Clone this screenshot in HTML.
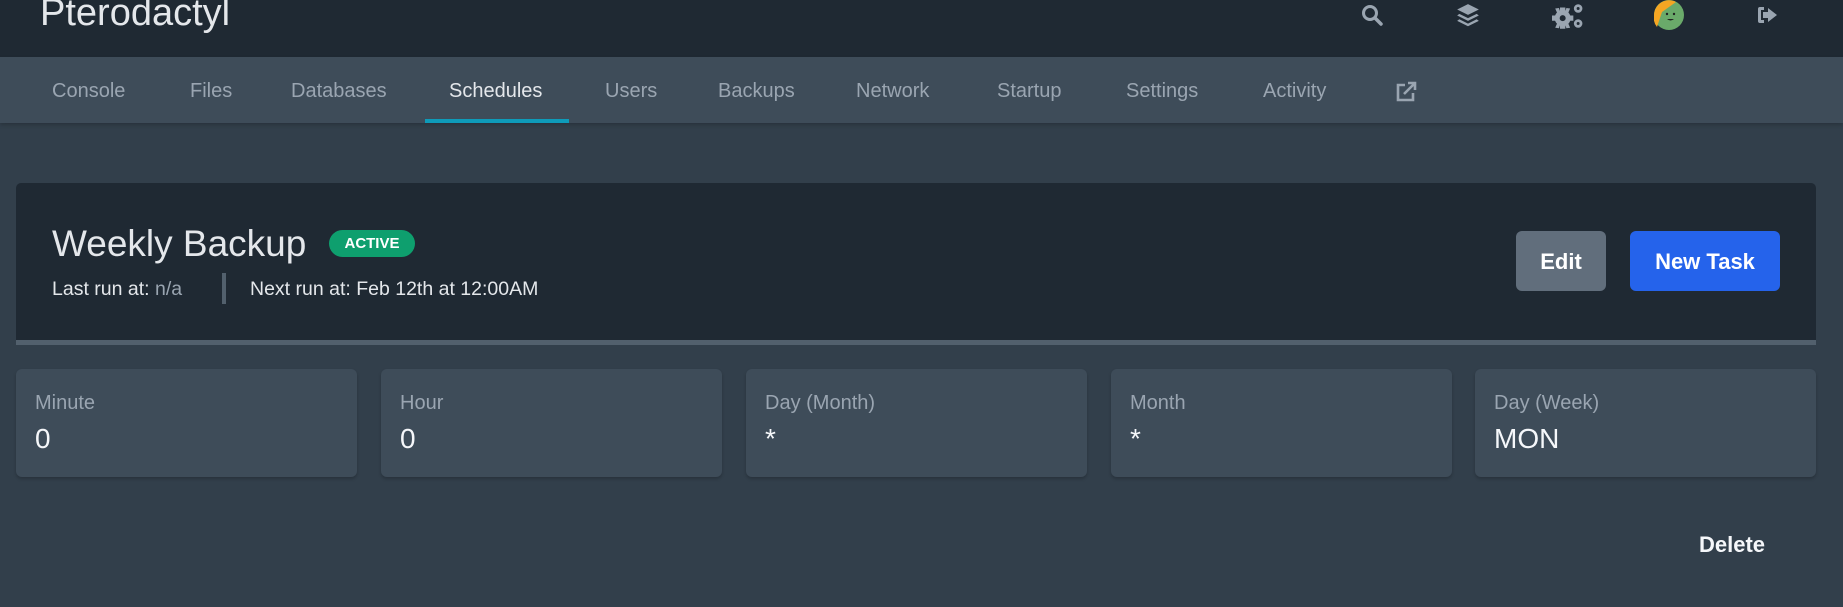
<!DOCTYPE html>
<html><head><meta charset="utf-8"><style>
*{box-sizing:border-box;margin:0;padding:0}
body{width:1843px;height:607px;overflow:hidden;background:#323f4b;font-family:"Liberation Sans",sans-serif;position:relative}
.hdr{position:absolute;left:0;top:0;width:1843px;height:57px;background:#1f2933}
.logo{position:absolute;left:40px;top:-8px;font-size:38px;color:#e4e7eb}
.ic{position:absolute;top:3px;width:24px;height:24px}
.nav{position:absolute;left:0;top:57px;width:1843px;height:66px;background:#3e4c59;box-shadow:0 2px 4px rgba(0,0,0,.2)}
.nav span{position:absolute;top:23px;font-size:20px;color:#9aa5b1}
.nav span.act{color:#e4e7eb}
.ul{position:absolute;left:425px;top:119px;width:144px;height:4px;background:#0e9bb9}
.card{position:absolute;left:16px;top:183px;width:1800px;height:162px;background:#1f2933;border-radius:5px 5px 0 0;border-bottom:5px solid #52606d}
.title{position:absolute;left:36px;top:40px;font-size:37px;color:#e4e7eb}
.badge{position:absolute;left:313px;top:47px;width:86px;height:27px;border-radius:14px;background:#0e9f6e;color:#fff;font-size:15px;font-weight:bold;text-align:center;line-height:27px}
.sub{position:absolute;top:95px;font-size:19.5px;color:#e4e7eb}
.sep{position:absolute;left:206px;top:90px;width:4px;height:31px;background:#52606d}
.btn{position:absolute;top:48px;height:60px;border-radius:6px;color:#fff;font-size:22px;font-weight:bold;text-align:center;line-height:62px}
.cell{position:absolute;top:369px;width:341px;height:108px;background:#3e4c59;border-radius:6px;box-shadow:0 2px 3px rgba(0,0,0,.2)}
.cell .l{position:absolute;left:19px;top:23px;font-size:20px;color:#9aa5b1}
.cell .v{position:absolute;left:19px;top:54px;font-size:28px;color:#f5f7fa}
</style></head><body>
<div class="hdr">
<div class="logo">Pterodactyl</div>
<svg class="ic" style="left:1360px" viewBox="0 0 24 24"><circle cx="10" cy="10" r="6.5" fill="none" stroke="#9aa5b1" stroke-width="3"/><path d="M15 15l6 6" stroke="#9aa5b1" stroke-width="3.5" stroke-linecap="round"/></svg>
<svg class="ic" style="left:1455px;width:26px;height:26px" viewBox="0 0 24 24" fill="#9aa5b1"><path d="M12 1l10 5-10 5-10-5z"/><path d="M4 10l8 4 8-4 2 1.5-10 5-10-5z"/><path d="M4 15l8 4 8-4 2 1.5-10 5-10-5z"/></svg>
<svg class="ic" style="left:1552px;width:32px;height:28px;top:2px" viewBox="0 0 30 26" fill="#9aa5b1"><circle cx="10" cy="15" r="7.5"/><circle cx="10" cy="15" r="2.8" fill="#1f2933"/><path d="M7.5 5h5v3.5h-5zM7.5 21.5h5v3.5h-5zM0 12.5h3.5v5h-3.5zM16.5 12.5h3.5v5h-3.5zM3 6l3.5-0.5 1 3-2.5 2zM17 6l-3.5-0.5-1 3 2.5 2zM3 24l3.5 0.5 1-3-2.5-2zM17 24l-3.5 0.5-1-3 2.5-2z"/><circle cx="24.5" cy="6" r="4"/><circle cx="24.5" cy="20" r="4"/><circle cx="24.5" cy="6" r="1.4" fill="#1f2933"/><circle cx="24.5" cy="20" r="1.4" fill="#1f2933"/></svg>
<svg style="position:absolute;left:1654px;top:0;width:30px;height:30px" viewBox="0 0 30 30"><circle cx="15" cy="15" r="15" fill="#6aaa6a"/><path d="M0 15A15 15 0 0 1 22 2L8 12 3 27A15 15 0 0 1 0 15z" fill="#f5a623"/><circle cx="13" cy="14" r="1.2" fill="#222"/><circle cx="20" cy="14" r="1.2" fill="#222"/><path d="M13 19q3.5 3 7 0z" fill="#222"/></svg>
<svg class="ic" style="left:1755px" viewBox="0 0 24 24" fill="#9aa5b1"><path d="M9 4H5a2 2 0 0 0-2 2v12a2 2 0 0 0 2 2h4v-3H6V7h3z"/><path d="M13 5l9 7-9 7v-4H8V9h5z"/></svg>
</div>
<div class="nav">
<span style="left:52px">Console</span>
<span style="left:190px">Files</span>
<span style="left:291px">Databases</span>
<span class="act" style="left:449px">Schedules</span>
<span style="left:605px">Users</span>
<span style="left:718px">Backups</span>
<span style="left:856px">Network</span>
<span style="left:997px">Startup</span>
<span style="left:1126px">Settings</span>
<span style="left:1263px">Activity</span>
<svg style="position:absolute;left:1395px;top:24px;width:22px;height:22px" viewBox="0 0 22 22" fill="none" stroke="#9aa5b1" stroke-width="2.6"><path d="M10 4H3v15h15v-7"/><path d="M9 13L19 3M13 2h7v7"/></svg>
</div>
<div class="ul"></div>
<div class="card">
<div class="title">Weekly Backup</div>
<div class="badge">ACTIVE</div>
<div class="sub" style="left:36px">Last run at: <span style="color:#9aa5b1">n/a</span></div>
<div class="sep"></div>
<div class="sub" style="left:234px">Next run at: Feb 12th at 12:00AM</div>
<div class="btn" style="left:1500px;width:90px;background:#616e7c">Edit</div>
<div class="btn" style="left:1614px;width:150px;background:#2563eb">New Task</div>
</div>
<div class="cell" style="left:16px"><div class="l">Minute</div><div class="v">0</div></div>
<div class="cell" style="left:381px"><div class="l">Hour</div><div class="v">0</div></div>
<div class="cell" style="left:746px"><div class="l">Day (Month)</div><div class="v">*</div></div>
<div class="cell" style="left:1111px"><div class="l">Month</div><div class="v">*</div></div>
<div class="cell" style="left:1475px"><div class="l">Day (Week)</div><div class="v">MON</div></div>
<div style="position:absolute;left:1699px;top:532px;font-size:22px;font-weight:bold;color:#f5f7fa">Delete</div>
</body></html>
